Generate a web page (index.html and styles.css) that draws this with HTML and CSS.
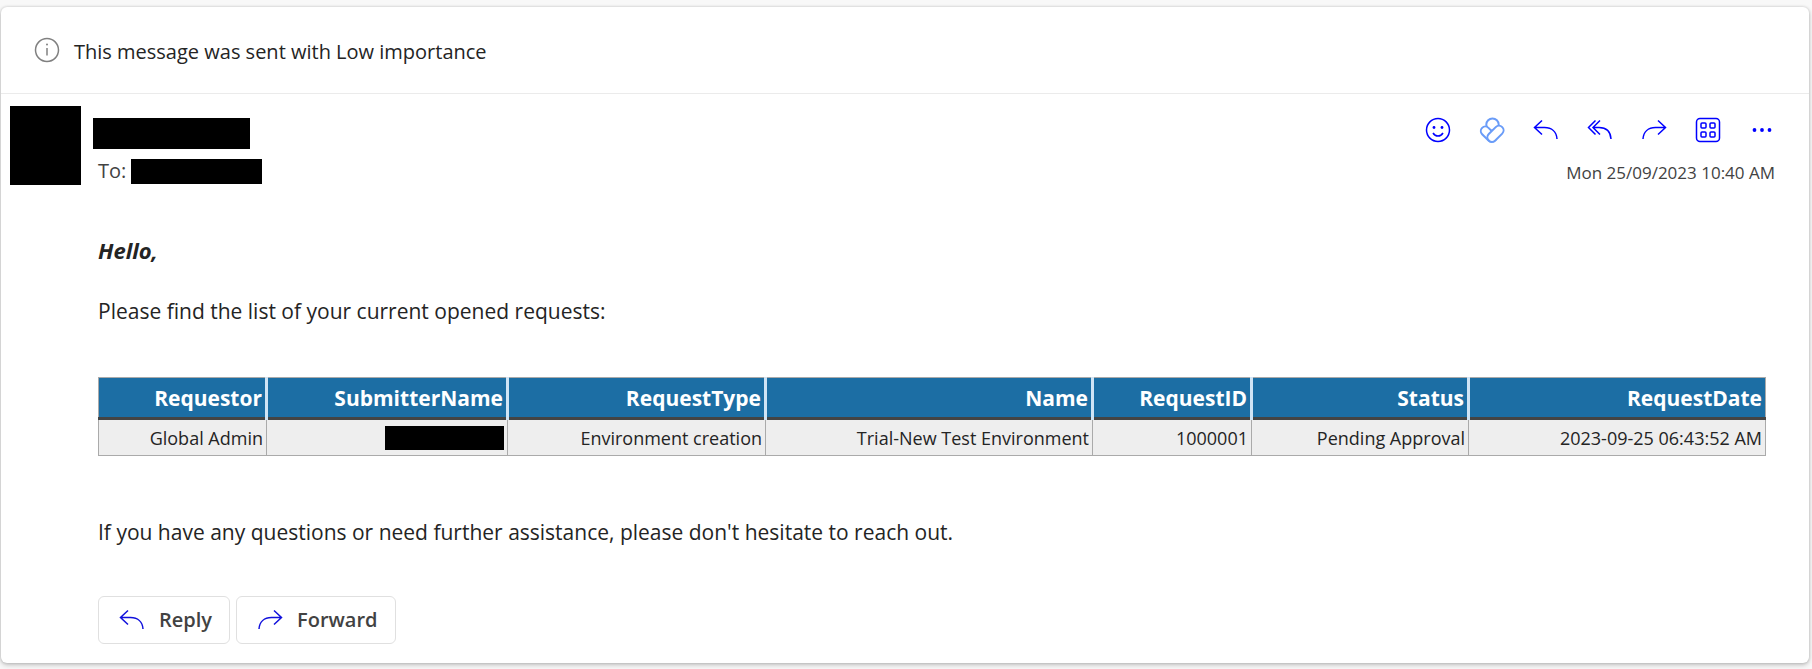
FILE: index.html
```
<!DOCTYPE html>
<html lang="en">
<head>
<meta charset="utf-8">
<title>Message</title>
<link rel="stylesheet" href="styles.css">
</head>
<body>
<svg class="sprite" aria-hidden="true">
  <symbol id="i-reply" viewBox="0 0 26 26"><path d="M9 3.500 1.500 10.500 9 17.500M2 10.500h9.500c7 0 12 4 12.500 11.500" /></symbol>
  <symbol id="i-forward" viewBox="0 0 26 26"><path d="M17 3.500l7.500 7-7.500 7M24 10.500h-9.500c-7 0-12 4-12.500 11.500" /></symbol>
</svg>
<article class="card">
  <div class="notice">
    <svg class="icon notice-icon" viewBox="0 0 26 26"><circle cx="13" cy="13" r="11.500"/><path d="M13 11v7.500"/><circle class="solid" cx="13" cy="7.500" r="1"/></svg>
    <span class="notice-text">This message was sent with Low importance</span>
  </div>
  <header class="head">
    <div class="avatar"></div>
    <div class="people">
      <div class="sender"></div>
      <div class="to"><span>To:</span><span class="recipient"></span></div>
    </div>
    <div class="side">
      <div class="actions">
        <button type="button" aria-label="React"><svg class="icon" viewBox="0 0 26 26"><circle cx="13" cy="13" r="11.500"/><circle class="solid" cx="9" cy="10.500" r="1.400"/><circle class="solid" cx="17" cy="10.500" r="1.400"/><path d="M8 16c2.500 4 7.500 4 10 0"/></svg></button>
        <button type="button" class="light" aria-label="Viva"><svg class="icon" viewBox="0 0 26 26"><circle cx="13.500" cy="7.600" r="6.200"/><rect x="-9" y="-4.500" width="18" height="9" rx="4.500" transform="translate(9.500 17.200) rotate(45)"/><rect x="-9.500" y="-4.600" width="19" height="9.200" rx="4.600" transform="translate(16.500 16.800) rotate(-45)"/></svg></button>
        <button type="button" aria-label="Reply"><svg class="icon"><use href="#i-reply"/></svg></button>
        <button type="button" aria-label="Reply all"><svg class="icon" viewBox="0 0 26 26"><path d="M8.500 3.500 1.500 10.500l7 7M13 3.500 6 10.500l7 7M6.500 10.500H12c7 0 11.500 4 12 11.500"/></svg></button>
        <button type="button" aria-label="Forward"><svg class="icon"><use href="#i-forward"/></svg></button>
        <button type="button" aria-label="Apps"><svg class="icon" viewBox="0 0 26 26"><rect x="1.500" y="1.500" width="23" height="23" rx="3.500"/><rect x="6" y="6" width="5" height="5" rx="1"/><rect x="15" y="6" width="5" height="5" rx="1"/><rect x="6" y="15" width="5" height="5" rx="1"/><rect x="15" y="15" width="5" height="5" rx="1"/></svg></button>
        <button type="button" aria-label="More"><svg class="icon" viewBox="0 0 26 26"><g class="solid"><circle cx="5.500" cy="13" r="1.900"/><circle cx="13" cy="13" r="1.900"/><circle cx="20.500" cy="13" r="1.900"/></g></svg></button>
      </div>
      <time datetime="2023-09-25T10:40">Mon 25/09/2023 10:40 AM</time>
    </div>
  </header>
  <div class="body">
    <p class="hello">Hello,</p>
    <p>Please find the list of your current opened requests:</p>
    <table>
      <colgroup><col class="c1"><col class="c2"><col class="c3"><col class="c4"><col class="c5"><col class="c6"><col class="c7"></colgroup>
      <thead>
        <tr><th>Requestor</th><th>SubmitterName</th><th>RequestType</th><th>Name</th><th>RequestID</th><th>Status</th><th>RequestDate</th></tr>
      </thead>
      <tbody>
        <tr><td>Global Admin</td><td><div class="redacted"></div></td><td>Environment creation</td><td>Trial-New Test Environment</td><td>1000001</td><td>Pending Approval</td><td>2023-09-25 06:43:52 AM</td></tr>
      </tbody>
    </table>
    <p>If you have any questions or need further assistance, please don't hesitate to reach out.</p>
    <div class="buttons">
      <button type="button"><svg class="icon"><use href="#i-reply"/></svg>Reply</button>
      <button type="button"><svg class="icon"><use href="#i-forward"/></svg>Forward</button>
    </div>
  </div>
</article>
</body>
</html>
```
FILE: styles.css
```
* { box-sizing: border-box; }

body {
  margin: 0;
  padding: 7px 3px 7px 1px;
  background: #f8f8f8;
  color: #242424;
  font: 21px/28px "Open Sans", "Noto Sans", sans-serif;
}

.sprite { display: none; }

.card {
  padding-bottom: 19px;
  background: #fff;
  border-radius: 6px;
  box-shadow: 0 0 3px rgba(0, 0, 0, .16), 0 2px 5px rgba(0, 0, 0, .22);
}

.icon {
  width: 26px;
  height: 26px;
  fill: none;
  stroke: currentColor;
  stroke-width: 1.5;
}

.solid { fill: currentColor; stroke: none; }

.notice {
  display: flex;
  align-items: center;
  gap: 14px;
  height: 87px;
  padding-left: 33px;
  border-bottom: 1px solid #ebebeb;
  font-size: 20px;
}

.notice-icon { color: #808080; }

.notice-text { padding-top: 3px; }

.head { display: flex; padding: 12px 34px 0 9px; }

.avatar { width: 71px; height: 79px; background: #000; }

.people { margin-left: 12px; padding-top: 12px; }

.sender { width: 157px; height: 31px; background: #000; }

.to {
  display: flex;
  align-items: center;
  gap: 5px;
  margin-top: 8px;
  padding-left: 5px;
  color: #424242;
  font-size: 20px;
}

.recipient { width: 131px; height: 25px; background: #000; }

.side {
  display: flex;
  flex-direction: column;
  align-items: flex-end;
  gap: 16px;
  margin-left: auto;
  padding-top: 11px;
  color: #424242;
  font-size: 17px;
}

.actions { display: flex; gap: 28px; }

.actions button {
  display: flex;
  padding: 0;
  border: 0;
  background: none;
  color: #00f;
}

.actions .light { color: #6a9cf8; }

.light .icon { stroke-width: 2; }

.light rect { fill: #fff; }

.body { padding: 49px 43px 0 97px; }

.body p { margin: 0 0 32px; }

.body .hello { margin-bottom: 33px; font-size: 22px; font-weight: 700; font-style: italic; }

table {
  width: 100%;
  margin: 52px 0 62px;
  table-layout: fixed;
  border-collapse: collapse;
  border: 1px solid #aaa;
  background: #eee;
  text-align: right;
}

.c1 { width: 168px; }
.c2 { width: 241px; }
.c3 { width: 258px; }
.c4 { width: 327px; }
.c5 { width: 159px; }
.c6 { width: 217px; }

thead { background: #1c6ea4; border-bottom: 3px solid #444; }

th {
  padding: 6px 3px 5px;
  border-left: 3px solid #d0e4f5;
  color: #fff;
  font-weight: 700;
  text-align: right;
}

th:first-child { border-left: 0; }

td {
  padding: 4px 3px 3px;
  border: 1px solid #aaa;
  font-size: 18px;
}

.redacted { width: 119px; height: 24px; margin-left: auto; background: #000; }

.buttons { display: flex; gap: 6px; padding-top: 18px; }

.buttons button {
  display: flex;
  align-items: center;
  gap: 14px;
  height: 48px;
  padding: 0 17px 0 20px;
  border: 1px solid #e0e0e0;
  border-radius: 6px;
  background: #fff;
  color: #424242;
  font: 600 20px/28px "Open Sans", "Noto Sans", sans-serif;
}

.buttons .icon { color: #1010dc; }
```
